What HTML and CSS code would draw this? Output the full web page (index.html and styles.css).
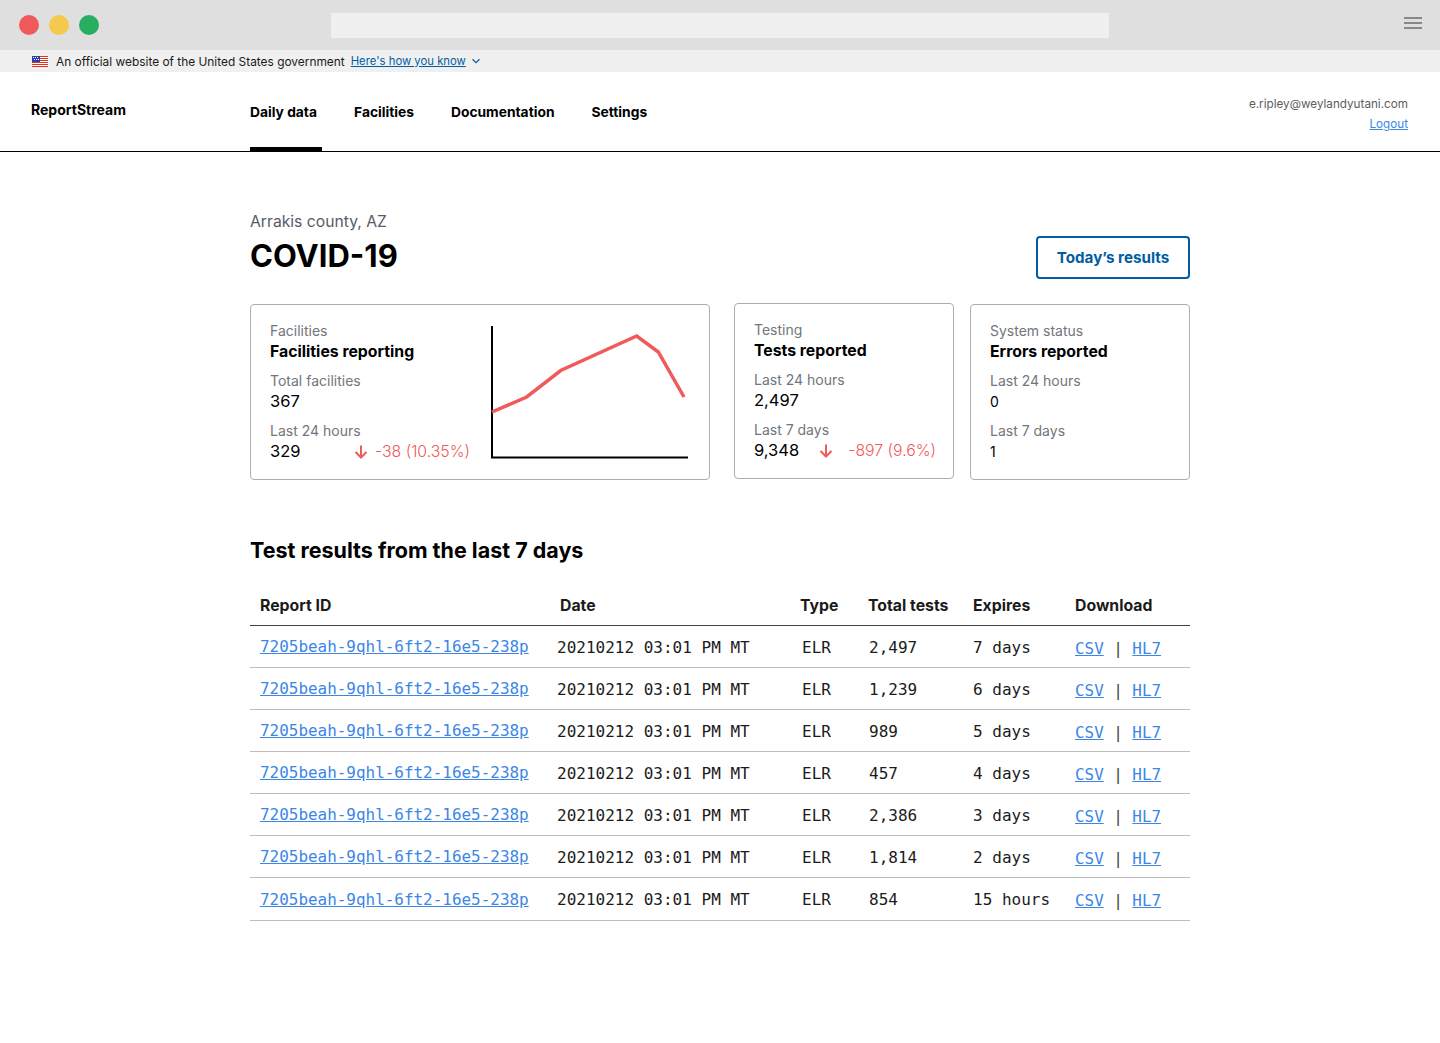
FILE: index.html
```html
<!DOCTYPE html>
<html lang="en">
<head>
    <meta charset="UTF-8">
    <meta name="viewport" content="width=device-width, initial-scale=1.0">
    <title>ReportStream - Daily data</title>
    <link rel="stylesheet" href="styles.css">
</head>
<body>
    <div class="browser-bar">
        <div class="dots">
            <span class="dot dot-red"></span>
            <span class="dot dot-yellow"></span>
            <span class="dot dot-green"></span>
        </div>
        <div class="address"></div>
        <div class="burger"><span></span><span></span><span></span></div>
    </div>

    <div class="gov-banner">
        <svg class="flag" width="16" height="11" viewBox="0 0 16 11">
            <rect width="16" height="11" fill="#fff"/>
            <rect y="0" width="16" height="1" fill="#e0301e"/>
            <rect y="2" width="16" height="1" fill="#e0301e"/>
            <rect y="4" width="16" height="1" fill="#e0301e"/>
            <rect y="6" width="16" height="1" fill="#e0301e"/>
            <rect y="8" width="16" height="1" fill="#e0301e"/>
            <rect y="10" width="16" height="1" fill="#e0301e"/>
            <rect width="8" height="6" fill="#2b3fa8"/>
            <g fill="#fff">
                <rect x="1" y="1" width="1" height="1"/><rect x="3" y="1" width="1" height="1"/><rect x="5" y="1" width="1" height="1"/>
                <rect x="2" y="3" width="1" height="1"/><rect x="4" y="3" width="1" height="1"/><rect x="6" y="3" width="1" height="1"/>
            </g>
        </svg>
        <span class="gov-text">An official website of the United States government</span>
        <a href="#" class="gov-link">Here's how you know</a>
        <svg class="chevron" width="10" height="6" viewBox="0 0 10 6"><path d="M1.5 1.2 5 4.6l3.5-3.4" fill="none" stroke="#005ea2" stroke-width="1.2"/></svg>
    </div>

    <header class="site-header">
        <div class="logo">ReportStream</div>
        <nav class="main-nav">
            <a href="#" class="nav-item active">Daily data</a>
            <a href="#" class="nav-item">Facilities</a>
            <a href="#" class="nav-item">Documentation</a>
            <a href="#" class="nav-item">Settings</a>
        </nav>
        <div class="user">
            <div class="user-email">e.ripley@weylandyutani.com</div>
            <a href="#" class="logout">Logout</a>
        </div>
    </header>

    <main class="content">
        <div class="page-head">
            <div>
                <div class="county">Arrakis county, AZ</div>
                <h1>COVID-19</h1>
            </div>
            <a href="#" class="btn-outline">Today’s results</a>
        </div>

        <section class="cards">
            <div class="card card-wide">
                <div class="card-body">
                    <div class="card-label">Facilities</div>
                    <div class="card-title">Facilities reporting</div>
                    <div class="card-label stat-label">Total facilities</div>
                    <div class="card-value">367</div>
                    <div class="card-label stat-label">Last 24 hours</div>
                    <div class="card-value value-row">
                        <span>329</span>
                        <span class="delta">
                            <svg class="arrow" width="14" height="14" viewBox="0 0 14 14"><path d="M7 .5v12M1.500 7 7 12.500 12.500 7" fill="none" stroke="#ef5a5a" stroke-width="2"/></svg>
                            <span class="delta-text">-38 (10.35%)</span>
                        </span>
                    </div>
                </div>
                <svg class="chart" width="200" height="134" viewBox="0 0 200 134">
                    <path d="M2 0v131.500M1 131.500h197" fill="none" stroke="#000" stroke-width="2"/>
                    <path d="M2 86 36.700 71 70.700 44.500 146.700 10 168.300 26 194 71" fill="none" stroke="#ef5a5a" stroke-width="3.500"/>
                </svg>
            </div>

            <div class="card card-shift">
                <div class="card-label">Testing</div>
                <div class="card-title">Tests reported</div>
                <div class="card-label stat-label">Last 24 hours</div>
                <div class="card-value">2,497</div>
                <div class="card-label stat-label">Last 7 days</div>
                <div class="card-value value-row">
                    <span>9,348</span>
                    <span class="delta delta-wide">
                        <svg class="arrow" width="14" height="14" viewBox="0 0 14 14"><path d="M7 .5v12M1.500 7 7 12.500 12.500 7" fill="none" stroke="#ef5a5a" stroke-width="2"/></svg>
                        <span class="delta-text">-897 (9.6%)</span>
                    </span>
                </div>
            </div>

            <div class="card">
                <div class="card-label">System status</div>
                <div class="card-title">Errors reported</div>
                <div class="card-label stat-label">Last 24 hours</div>
                <div class="card-value card-value-small">0</div>
                <div class="card-label stat-label">Last 7 days</div>
                <div class="card-value card-value-small">1</div>
            </div>
        </section>

        <h2>Test results from the last 7 days</h2>

        <table class="results">
            <colgroup>
                <col class="col-id"><col class="col-date"><col class="col-type">
                <col class="col-total"><col class="col-expires"><col class="col-download">
            </colgroup>
            <thead>
                <tr>
                    <th class="cell-id">Report ID</th>
                    <th class="th-date">Date</th>
                    <th>Type</th>
                    <th>Total tests</th>
                    <th>Expires</th>
                    <th>Download</th>
                </tr>
            </thead>
            <tbody>
                <tr>
                    <td class="cell-id"><a href="#">7205beah-9qhl-6ft2-16e5-238p</a></td>
                    <td>20210212 03:01 PM MT</td><td class="td-type">ELR</td><td class="td-total">2,497</td><td>7 days</td>
                    <td class="td-dl"><a href="#">CSV</a><span class="sep">|</span><a href="#">HL7</a></td>
                </tr>
                <tr>
                    <td class="cell-id"><a href="#">7205beah-9qhl-6ft2-16e5-238p</a></td>
                    <td>20210212 03:01 PM MT</td><td class="td-type">ELR</td><td class="td-total">1,239</td><td>6 days</td>
                    <td class="td-dl"><a href="#">CSV</a><span class="sep">|</span><a href="#">HL7</a></td>
                </tr>
                <tr>
                    <td class="cell-id"><a href="#">7205beah-9qhl-6ft2-16e5-238p</a></td>
                    <td>20210212 03:01 PM MT</td><td class="td-type">ELR</td><td class="td-total">989</td><td>5 days</td>
                    <td class="td-dl"><a href="#">CSV</a><span class="sep">|</span><a href="#">HL7</a></td>
                </tr>
                <tr>
                    <td class="cell-id"><a href="#">7205beah-9qhl-6ft2-16e5-238p</a></td>
                    <td>20210212 03:01 PM MT</td><td class="td-type">ELR</td><td class="td-total">457</td><td>4 days</td>
                    <td class="td-dl"><a href="#">CSV</a><span class="sep">|</span><a href="#">HL7</a></td>
                </tr>
                <tr>
                    <td class="cell-id"><a href="#">7205beah-9qhl-6ft2-16e5-238p</a></td>
                    <td>20210212 03:01 PM MT</td><td class="td-type">ELR</td><td class="td-total">2,386</td><td>3 days</td>
                    <td class="td-dl"><a href="#">CSV</a><span class="sep">|</span><a href="#">HL7</a></td>
                </tr>
                <tr>
                    <td class="cell-id"><a href="#">7205beah-9qhl-6ft2-16e5-238p</a></td>
                    <td>20210212 03:01 PM MT</td><td class="td-type">ELR</td><td class="td-total">1,814</td><td>2 days</td>
                    <td class="td-dl"><a href="#">CSV</a><span class="sep">|</span><a href="#">HL7</a></td>
                </tr>
                <tr class="row-last">
                    <td class="cell-id"><a href="#">7205beah-9qhl-6ft2-16e5-238p</a></td>
                    <td>20210212 03:01 PM MT</td><td class="td-type">ELR</td><td class="td-total">854</td><td>15 hours</td>
                    <td class="td-dl"><a href="#">CSV</a><span class="sep">|</span><a href="#">HL7</a></td>
                </tr>
            </tbody>
        </table>
    </main>
</body>
</html>
```

FILE: styles.css
```css
body {
    font-family: Inter, "Liberation Sans", sans-serif;
    margin: 0;
    padding: 0;
    background-color: #ffffff;
    color: #000;
}
a {
    color: #3b86e8;
}

/* browser chrome */
.browser-bar {
    height: 50px;
    background: #dfdfdf;
    display: flex;
    align-items: flex-start;
    padding: 0 18px 0 19px;
}
.dots {
    display: flex;
    gap: 10px;
    padding-top: 15px;
}
.dot {
    width: 20px;
    height: 20px;
    border-radius: 50%;
}
.dot-red { background: #ef5a5a; }
.dot-yellow { background: #f5c94c; }
.dot-green { background: #27ae60; }
.address {
    width: 778px;
    height: 25px;
    margin-top: 13px;
    margin-left: 232px;
    background: #f0f0f0;
}
.burger {
    width: 18px;
    margin-left: auto;
    padding-top: 17px;
    display: flex;
    flex-direction: column;
    gap: 3px;
}
.burger span {
    height: 2px;
    background: #888;
}

/* gov banner */
.gov-banner {
    height: 22px;
    background: #f0f0f0;
    display: flex;
    align-items: center;
    padding-left: 32px;
    font-size: 11.9px;
    color: #1b1b1b;
}
.flag {
    margin-right: 8px;
}
.gov-link {
    color: #005ea2;
    margin-left: 6px;
    font-size: 11.3px;
}
.chevron {
    margin-left: 5px;
}

/* site header */
.site-header {
    height: 79px;
    border-bottom: 1px solid #000;
    display: flex;
    align-items: flex-start;
    padding: 0 32px 0 31px;
}
.logo {
    width: 219px;
    padding-top: 28px;
    font-size: 14px;
    line-height: 20px;
    font-weight: 700;
}
.main-nav {
    display: flex;
    flex: 1;
    gap: 32px;
}
.nav-item {
    padding: 31px 5px 0 0;
    height: 44px;
    border-bottom: 4px solid transparent;
    font-size: 13.8px;
    line-height: 18px;
    font-weight: 700;
    color: #000;
    text-decoration: none;
}
.nav-item.active {
    border-bottom-color: #000;
}
.user {
    text-align: right;
    padding-top: 22px;
    font-size: 11.7px;
    line-height: 20px;
}
.user-email {
    color: #5c5c5c;
}

/* page */
.content {
    width: 940px;
    margin: 0 auto;
}
.page-head {
    display: flex;
    justify-content: space-between;
    align-items: flex-end;
    padding-top: 59px;
}
.county {
    font-size: 15.7px;
    line-height: 22px;
    color: #565c65;
}
h1 {
    margin: 1px 0 0;
    font-size: 31px;
    line-height: 44px;
    font-weight: 700;
}
.btn-outline {
    width: 150px;
    height: 39px;
    margin-bottom: -1px;
    border: 2px solid #005ea2;
    border-radius: 4px;
    display: flex;
    align-items: center;
    justify-content: center;
    color: #005ea2;
    font-size: 15.2px;
    font-weight: 700;
    text-decoration: none;
}

/* cards */
.cards {
    display: flex;
    gap: 16px;
    margin-top: 26px;
}
.card {
    width: 220px;
    height: 176px;
    box-sizing: border-box;
    padding: 16px 19px 0;
    border: 1px solid #a9aeb1;
    border-radius: 4px;
}
.card-wide {
    display: flex;
    justify-content: space-between;
    margin-right: 8px;
    width: 460px;
}
.card-body {
    width: 200px;
}
.card-shift {
    margin-top: -1px;
    padding-right: 17px;
}
.card-label {
    font-size: 14px;
    line-height: 20px;
    color: #71767a;
}
.stat-label {
    margin-top: 10px;
}
.card-title {
    font-size: 15.8px;
    line-height: 22px;
    margin-bottom: -2px;
    font-weight: 700;
}
.card-value {
    font-size: 16.5px;
    line-height: 20px;
}
.card-value-small {
    font-size: 14px;
    line-height: 22px;
    margin-bottom: -2px;
}
.value-row {
    display: flex;
    justify-content: space-between;
    align-items: flex-start;
    white-space: nowrap;
}
.delta {
    display: flex;
    align-items: center;
    gap: 7px;
    height: 20px;
    margin-top: 1px;
    margin-bottom: -1px;
    color: #ef5a5a;
    font-size: 15.8px;
    font-weight: 300;
}
.delta-wide {
    gap: 15px;
}
.chart {
    margin: 5px 0 0;
    flex-shrink: 0;
}

/* table */
h2 {
    margin: 55px 0 0;
    font-size: 21.5px;
    line-height: 30px;
    font-weight: 700;
}
.results {
    width: 940px;
    margin-top: 20px;
    table-layout: fixed;
    border-collapse: collapse;
}
.col-id { width: 307px; }
.col-date { width: 243px; }
.col-type { width: 68px; }
.col-total { width: 105px; }
.col-expires { width: 102px; }
.col-download { width: 115px; }
.results th {
    height: 40px;
    padding: 0;
    text-align: left;
    font-size: 15.8px;
    font-weight: 700;
    color: #1b1b1b;
    border-bottom: 1px solid #3d4551;
}
.results td {
    box-sizing: border-box;
    height: 42px;
    padding: 1px 0 0;
    font-family: "DejaVu Sans Mono", "Liberation Mono", monospace;
    font-size: 16px;
    color: #1b1b1b;
    border-bottom: 1px solid #bdbdbd;
    white-space: nowrap;
}
.results .cell-id {
    padding: 0 0 0 10px;
}
.results .cell-id a {
    font-size: 15.95px;
}
.results .th-date {
    padding-left: 3px;
}
.results .td-type {
    padding-left: 2px;
}
.results .td-total {
    padding-left: 1px;
}
.results .td-dl {
    padding-top: 3px;
}
.results .td-dl a {
    font-size: 15.9px;
}
.results .row-last td {
    height: 43px;
}
.sep {
    margin: 0 9.5px;
    color: #444;
}
```
